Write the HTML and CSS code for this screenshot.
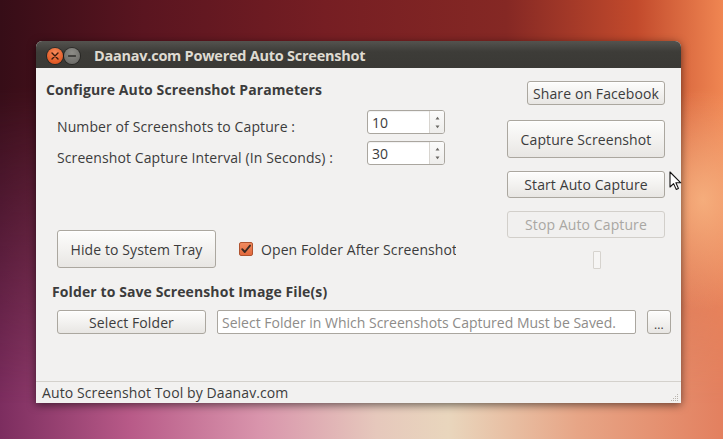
FILE: index.html
```html
<!DOCTYPE html>
<html lang="en">
<head>
    <meta charset="UTF-8">
    <meta name="viewport" content="width=device-width, initial-scale=1.0">
    <title>Daanav.com Powered Auto Screenshot</title>
    <link rel="stylesheet" href="styles.css">
</head>
<body>
    <div class="desktop">
        <div class="window">
            <div class="titlebar">
                <span class="wbtn close">
                    <svg width="8" height="8" viewBox="0 0 8 8"><path d="M1 1L7 7M7 1L1 7" stroke="#3a1a0c" stroke-width="1.4" stroke-linecap="round"/></svg>
                </span>
                <span class="wbtn minimize">
                    <svg width="8" height="8" viewBox="0 0 8 8"><path d="M0.5 4H7.5" stroke="#2e2d2a" stroke-width="1.4" stroke-linecap="round"/></svg>
                </span>
                <span class="title">Daanav.com Powered Auto Screenshot</span>
            </div>

            <div class="content">
                <div class="main">
                    <div class="left">
                        <h2 class="heading">Configure Auto Screenshot Parameters</h2>
                        <div class="params">
                            <div class="param-row">
                                <label for="shotCount">Number of Screenshots to Capture :</label>
                                <div class="spin">
                                    <input id="shotCount" type="text" value="10">
                                    <span class="spin-arrows">
                                        <svg width="5" height="4" viewBox="0 0 5 4"><path d="M0.5 3.5L2.5 0.8L4.5 3.5Z" fill="#6a6864"/></svg>
                                        <svg width="5" height="4" viewBox="0 0 5 4"><path d="M0.5 0.5L2.5 3.2L4.5 0.5Z" fill="#6a6864"/></svg>
                                    </span>
                                </div>
                            </div>
                            <div class="param-row">
                                <label for="shotInterval">Screenshot Capture Interval (In Seconds) :</label>
                                <div class="spin">
                                    <input id="shotInterval" type="text" value="30">
                                    <span class="spin-arrows">
                                        <svg width="5" height="4" viewBox="0 0 5 4"><path d="M0.5 3.5L2.5 0.8L4.5 3.5Z" fill="#6a6864"/></svg>
                                        <svg width="5" height="4" viewBox="0 0 5 4"><path d="M0.5 0.5L2.5 3.2L4.5 0.5Z" fill="#6a6864"/></svg>
                                    </span>
                                </div>
                            </div>
                        </div>
                        <div class="action-row">
                            <button class="btn btn-tall btn-tray">Hide to System Tray</button>
                            <label class="check">
                                <span class="check-box">
                                    <svg width="12" height="12" viewBox="0 0 12 12"><path d="M2.2 6.2L4.8 9L10 2.6" fill="none" stroke="#3b2a22" stroke-width="1.9" stroke-linecap="round" stroke-linejoin="round"/></svg>
                                </span>
                                <span class="check-text">Open Folder After Screenshot</span>
                            </label>
                        </div>
                    </div>

                    <div class="right">
                        <button class="btn btn-share">Share on Facebook</button>
                        <button class="btn btn-tall btn-capture">Capture Screenshot</button>
                        <button class="btn btn-mid">Start Auto Capture</button>
                        <button class="btn btn-mid" disabled>Stop Auto Capture</button>
                        <span class="status-box"></span>
                    </div>
                </div>

                <h2 class="heading folder-heading">Folder to Save Screenshot Image File(s)</h2>
                <div class="folder-row">
                    <button class="btn btn-folder">Select Folder</button>
                    <input class="path" type="text" placeholder="Select Folder in Which Screenshots Captured Must be Saved.">
                    <button class="btn btn-dots">...</button>
                </div>
            </div>

            <div class="statusbar">
                <span>Auto Screenshot Tool by Daanav.com</span>
                <svg class="grip" width="10" height="10" viewBox="0 0 10 10">
                    <rect x="8" y="2" width="1" height="1" fill="#b9b5ae"/>
                    <rect x="6" y="4" width="1" height="1" fill="#b9b5ae"/>
                    <rect x="8" y="4" width="1" height="1" fill="#b9b5ae"/>
                    <rect x="4" y="6" width="1" height="1" fill="#b9b5ae"/>
                    <rect x="6" y="6" width="1" height="1" fill="#b9b5ae"/>
                    <rect x="8" y="6" width="1" height="1" fill="#b9b5ae"/>
                    <rect x="2" y="8" width="1" height="1" fill="#b9b5ae"/>
                    <rect x="4" y="8" width="1" height="1" fill="#b9b5ae"/>
                    <rect x="6" y="8" width="1" height="1" fill="#b9b5ae"/>
                    <rect x="8" y="8" width="1" height="1" fill="#b9b5ae"/>
                </svg>
            </div>
        </div>

        <!-- mouse pointer over the desktop -->
        <svg class="pointer" width="13" height="20" viewBox="0 0 13 20">
            <path d="M1 1V16L4.6 12.6L7.2 18.4L9.4 17.4L6.9 11.8H11.8Z" fill="#fff" stroke="#111" stroke-width="1.1" stroke-linejoin="round"/>
        </svg>
    </div>
</body>
</html>
```

FILE: styles.css
```css
* {
    box-sizing: border-box;
}
body {
    margin: 0;
    font-family: "Open Sans", "DejaVu Sans", sans-serif;
    font-size: 14px;
    letter-spacing: 0.1px;
    color: #3c3c3c;
    overflow: hidden;
}
.desktop {
    position: relative;
    width: 723px;
    height: 439px;
    padding: 41px 0 0 36px;
    background: linear-gradient(90deg, #7c2d5f 0%, #b85a88 18%, #d995ac 36%, #e6c8bc 52%, #e9d6bd 62%, #e7a586 80%, #e3805f 100%);
    overflow: hidden;
}
.desktop::before {
    content: "";
    position: absolute;
    inset: 0;
    background: linear-gradient(90deg, #360d17 0%, #5a1520 20%, #761e23 45%, #852824 70%, #c24a2c 88%, #f08652 100%);
    -webkit-mask-image: linear-gradient(to bottom, #000 0%, #000 20%, transparent 92%);
    mask-image: linear-gradient(to bottom, #000 0%, #000 20%, transparent 92%);
}
.desktop::after {
    content: "";
    position: absolute;
    right: -60px;
    top: 90px;
    width: 160px;
    height: 220px;
    border-radius: 50%;
    background: radial-gradient(closest-side, rgba(247, 178, 128, 0.9), rgba(247, 178, 128, 0));
}
.window {
    position: relative;
    z-index: 1;
    width: 645px;
    height: 362px;
    display: flex;
    flex-direction: column;
    background: #f2f1f0;
    border-radius: 6px 6px 0 0;
    box-shadow: 0 2px 9px rgba(0, 0, 0, 0.55);
}
.titlebar {
    height: 27px;
    display: flex;
    align-items: center;
    padding: 2px 0 0 11px;
    background: linear-gradient(to bottom, #54534f, #3d3c38 40%, #3a3935);
    border-radius: 6px 6px 0 0;
}
.wbtn {
    width: 16px;
    height: 16px;
    border-radius: 50%;
    display: flex;
    align-items: center;
    justify-content: center;
    margin-right: 1px;
}
.close {
    background: radial-gradient(circle at 50% 30%, #f78a5a, #e35b26 70%, #c94a1c);
    box-shadow: 0 0 0 1px rgba(0, 0, 0, 0.35);
}
.minimize {
    background: radial-gradient(circle at 50% 30%, #8d8c87, #6f6e6a 75%);
    box-shadow: 0 0 0 1px rgba(0, 0, 0, 0.35);
}
.title {
    margin-left: 13px;
    font-weight: bold;
    font-size: 14.5px;
    color: #dfdbd2;
    letter-spacing: -0.25px;
}
.content {
    flex: 1;
    padding: 12px 10px 0 10px;
}
.main {
    display: flex;
    justify-content: space-between;
}
.left {
    width: 461px;
}
.heading {
    margin: 0;
    font-size: 14px;
    font-weight: bold;
    line-height: 20px;
    color: #3c3c3c;
}
.params {
    margin-top: 10px;
    padding-left: 11px;
}
.param-row {
    display: flex;
    align-items: flex-start;
    height: 24px;
    margin-bottom: 7px;
}
.param-row label {
    width: 310px;
    margin-top: 7px;
    line-height: 20px;
}
.spin {
    display: flex;
    width: 78px;
    height: 24px;
    border: 1px solid #aaa69f;
    border-radius: 3px;
    background: #fff;
    box-shadow: inset 0 1px 1px rgba(0, 0, 0, 0.06);
}
.spin input {
    width: 61px;
    border: none;
    background: transparent;
    padding: 0 0 0 4px;
    font-family: inherit;
    font-size: 14px;
    color: #3c3c3c;
    outline: none;
}
.spin-arrows {
    flex: 1;
    display: flex;
    flex-direction: column;
    align-items: center;
    justify-content: space-around;
    padding: 2px 0;
    border-left: 1px solid #d8d5d0;
    border-radius: 0 2px 2px 0;
    background: linear-gradient(to bottom, #fbfbfb, #eeedeb);
}
.action-row {
    display: flex;
    align-items: center;
    margin-top: 65px;
    padding-left: 11px;
}
.btn {
    display: block;
    padding: 0;
    border: 1px solid #aba79f;
    border-radius: 3px;
    background: linear-gradient(to bottom, #fdfdfc, #f3f2f0 50%, #e8e6e3);
    box-shadow: inset 0 1px 0 #fff;
    font-family: inherit;
    font-size: 14px;
    letter-spacing: 0.1px;
    color: #3c3c3c;
    cursor: pointer;
}
.btn:disabled {
    border-color: #d2cfca;
    background: #f1f0ef;
    color: #a9a7a3;
    box-shadow: none;
}
.btn-tall {
    height: 38px;
}
.btn-mid {
    height: 27px;
    width: 158px;
    margin-top: 13px;
}
.btn-tray {
    width: 159px;
}
.check {
    display: flex;
    align-items: center;
    width: 217px;
    margin-left: 23px;
    overflow: hidden;
    white-space: nowrap;
}
.check-box {
    flex: none;
    width: 14px;
    height: 14px;
    display: flex;
    align-items: center;
    justify-content: center;
    border: 1px solid #b0532f;
    border-radius: 2px;
    background: linear-gradient(to bottom, #f08a5e, #e2693d);
}
.check-text {
    margin-left: 8px;
    letter-spacing: 0.1px;
}
.right {
    width: 158px;
    margin: 1px 6px 0 0;
    display: flex;
    flex-direction: column;
    align-items: flex-end;
}
.btn-share {
    width: 138px;
    height: 24px;
}
.btn-capture {
    width: 158px;
    margin-top: 15px;
}
.status-box {
    display: block;
    width: 8px;
    height: 18px;
    margin: 13px 64px 0 0;
    border: 1px solid #d6d3ce;
    border-radius: 1px;
    background: #f6f5f4;
}
.folder-heading {
    margin: 13px 0 0 6px;
}
.folder-row {
    display: flex;
    align-items: center;
    gap: 11px;
    margin: 8px 0 0 11px;
    height: 24px;
}
.btn-folder {
    width: 149px;
    height: 24px;
}
.path {
    flex: 1;
    height: 24px;
    padding: 0 4px;
    border: 1px solid #aaa69f;
    border-radius: 2px;
    background: #fff;
    font-family: inherit;
    font-size: 14px;
    color: #3c3c3c;
    outline: none;
}
.path::placeholder {
    color: #8e8c89;
}
.btn-dots {
    width: 24px;
    height: 24px;
    font-size: 12px;
    line-height: 10px;
    padding-top: 6px;
}
.statusbar {
    height: 22px;
    display: flex;
    align-items: center;
    justify-content: space-between;
    padding: 0 2px 0 6px;
    border-top: 1px solid #d4d1cc;
    line-height: 20px;
}
.grip {
    align-self: flex-end;
    margin-bottom: 1px;
}
.pointer {
    position: absolute;
    left: 669px;
    top: 171px;
    z-index: 2;
}
```
